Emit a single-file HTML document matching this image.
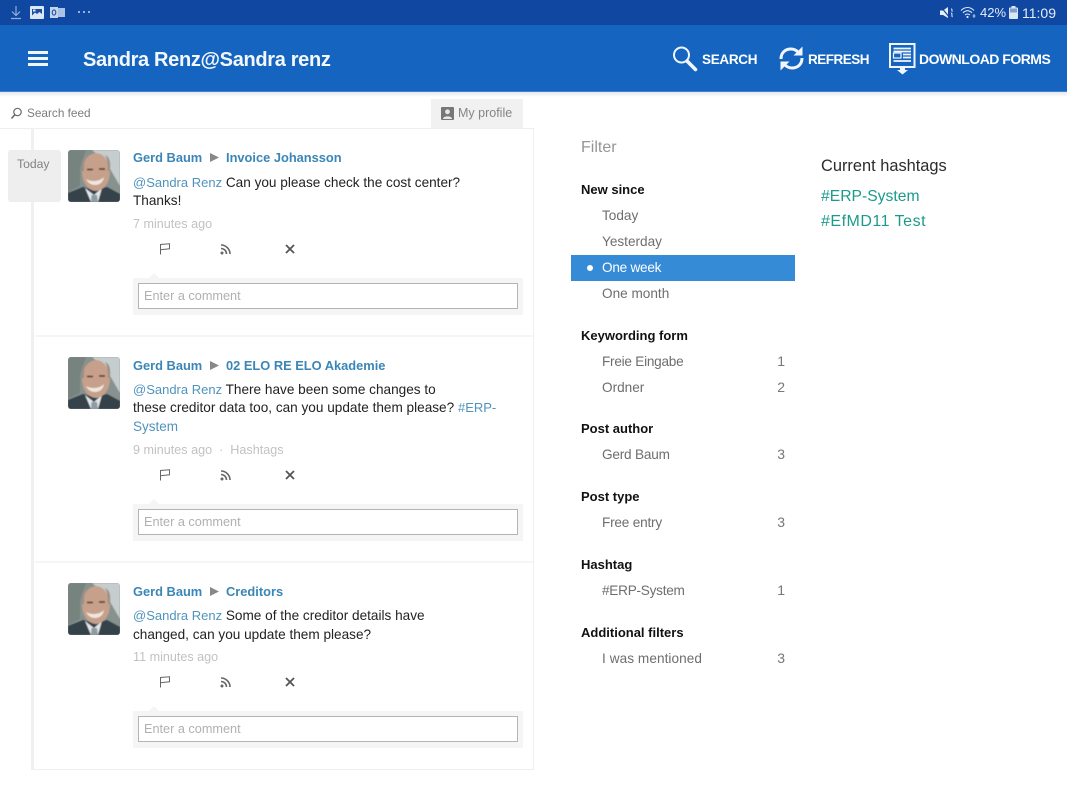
<!DOCTYPE html>
<html><head><meta charset="utf-8"><style>
html,body{margin:0;padding:0;background:#fff}
#p{position:relative;width:1067px;height:800px;overflow:hidden;font-family:"Liberation Sans",sans-serif;font-size:14px;background:#fff}
#p div,#p svg,#p span.a{position:absolute}
.t{white-space:nowrap;line-height:18px;height:18px}
.n{color:#3a86b7;font-weight:bold;font-size:12.85px}
.b{color:#222;font-size:13.6px}
.l{color:#4f94bd;font-size:13px}
.g{color:#c2c2c2;font-size:12.6px}
.f{color:#6e6e6e;font-size:13.6px;margin-top:1px}
.h{color:#111;font-weight:bold;font-size:13px}
.c{color:#777;font-size:14px;text-align:right;width:20px}
.box{background:#f5f5f5}
.inp{background:#fff;border:1px solid #b4b4b4;box-sizing:border-box;color:#b0b0b0;font-size:12.7px;line-height:24px;padding-left:5px;white-space:nowrap}
.w{color:#fff;font-weight:bold;font-size:14px}
</style></head><body><div id="p">
<svg width="0" height="0" style="position:absolute"><defs>
<filter id="bl" x="-5%" y="-5%" width="110%" height="110%"><feGaussianBlur stdDeviation="0.6"/></filter>
<symbol id="av" viewBox="0 0 52 52">
<rect width="52" height="52" fill="#87928f"/>
<g filter="url(#bl)">
<path d="M24 0H52V36L38 12Z" fill="#c6cdce"/>
<path d="M0 0H18L12 18 12 36 0 42Z" fill="#76837f"/>
<path d="M0 52V43L15 37 26 40 39 37 52 44V52Z" fill="#36434a"/>
<path d="M17 38L26 45 34 38 30 52H23Z" fill="#e3e6e9"/>
<path d="M23.500 45H29L30 52H23Z" fill="#8d9ba3"/>
<ellipse cx="28" cy="22" rx="14" ry="19" fill="#c6a08a"/>
<path d="M14 21C13 10 15 7 19 5 16 10 16 15 16 21ZM42 21C43 10 41 7 37 5 40 10 40 15 40 21Z" fill="#9b8f87"/>
<path d="M18 29C23 32 31 32 36 27 35 33 31 35 27 35S20 33 18 29Z" fill="#efe6de"/>
<path d="M19 19.500H25M31 19H37" stroke="#5e4436" stroke-width="1.800"/>
</g>
</symbol>
<symbol id="fl" viewBox="0 0 12 12"><path d="M1.500 11.500V1.500L10.500 0.800V5.800L1.500 6.800" fill="none" stroke="#666" stroke-width="1"/></symbol>
<symbol id="rs" viewBox="0 0 12 12"><circle cx="2" cy="10" r="1.500" fill="#666"/><path d="M1 5.500A5.500 5.500 0 0 1 6.500 11M1 2A9 9 0 0 1 10 11" fill="none" stroke="#666" stroke-width="1.600"/></symbol>
<symbol id="xx" viewBox="0 0 10 10"><path d="M1 1L9 9M9 1L1 9" stroke="#555" stroke-width="1.800"/></symbol>
</defs></svg>

<div style="left:0;top:0;width:1067px;height:25px;background:#0f47a1"></div>
<div style="left:0;top:25px;width:1067px;height:67px;background:#1565c0;border-bottom:1px solid #3f82cd;box-sizing:border-box"></div>
<div style="left:0;top:92px;width:1067px;height:5px;background:linear-gradient(#e4e7ec,#fff)"></div>

<svg style="left:10px;top:5px" width="12" height="15" viewBox="0 0 12 15"><path d="M6 1V10M2 6.500L6 10.500 10 6.500M1 13.500H11" fill="none" stroke="#8fb0dc" stroke-width="1.200"/></svg>
<svg style="left:30px;top:6px" width="14" height="13" viewBox="0 0 14 13"><rect width="14" height="13" rx="1" fill="#dce7f5"/><path d="M2 9.500L5 6.500 7 8 9.500 6 12 8V3H2Z" fill="#1b4f9f"/><rect x="3" y="3.500" width="2.500" height="2" fill="#dce7f5"/></svg>
<svg style="left:50px;top:6px" width="15" height="13" viewBox="0 0 15 13"><rect x="6" y="2" width="9" height="9" fill="#a9c2e5"/><rect x="0" y="1" width="8" height="11" fill="#c3d5ee"/><ellipse cx="4" cy="6.500" rx="1.800" ry="2.600" fill="none" stroke="#1b4f9f" stroke-width="1.100"/></svg>
<div style="left:78px;top:11px;width:2px;height:2px;background:#c5d5ec;border-radius:50%"></div>
<div style="left:83px;top:11px;width:2px;height:2px;background:#c5d5ec;border-radius:50%"></div>
<div style="left:88px;top:11px;width:2px;height:2px;background:#c5d5ec;border-radius:50%"></div>

<svg style="left:940px;top:6px" width="15" height="14" viewBox="0 0 15 14"><path d="M0 4.500H3L8 1V12L3 9H0Z" fill="#e8eff8"/><path d="M1 1L10 12" stroke="#0f47a1" stroke-width="1.200"/><path d="M11 3C13 3 11 5 12.500 5.500M11 7C13 7 11 10 12.500 11" fill="none" stroke="#e8eff8" stroke-width="1"/></svg>
<svg style="left:960px;top:6px" width="17" height="13" viewBox="0 0 17 13"><path d="M1 4.500C5 .5 10 .5 14 4.500M3 6.800C6 4 9 4 12 6.800M5 9C6.500 7.700 8.500 7.700 10 9" fill="none" stroke="#dce7f5" stroke-width="1.100"/><circle cx="7.500" cy="11" r="1.100" fill="#dce7f5"/><path d="M14 8V12M12.500 10H15.500" stroke="#dce7f5" stroke-width=".8"/></svg>
<div class="t" style="left:980px;top:4px;color:#e6edf7;font-size:13px">42%</div>
<svg style="left:1009px;top:6px" width="9" height="13" viewBox="0 0 9 13"><rect x="2.500" y="0" width="4" height="2" fill="#dce7f5"/><rect x="0" y="1.500" width="9" height="11.500" rx="1" fill="#dce7f5"/><rect x="1" y="2.500" width="7" height="4" fill="#7f9fd0"/></svg>
<div class="t" style="left:1022px;top:4px;color:#e6edf7;font-size:14px">11:09</div>

<div style="left:28px;top:51px;width:20px;height:2.500px;background:#f0f6fc"></div>
<div style="left:28px;top:57px;width:20px;height:2.500px;background:#f0f6fc"></div>
<div style="left:28px;top:63px;width:20px;height:2.500px;background:#f0f6fc"></div>
<div class="t" style="left:83px;top:47px;height:26px;line-height:26px;color:#f3f8fd;font-size:20px;font-weight:bold;letter-spacing:-.33px">Sandra Renz@Sandra renz</div>

<svg style="left:672px;top:45px" width="26" height="27" viewBox="0 0 26 27"><circle cx="9.500" cy="10" r="7.500" fill="none" stroke="#f2f6fc" stroke-width="2"/><path d="M15 16L23.500 24.500" stroke="#f2f6fc" stroke-width="3.600" stroke-linecap="round"/></svg>
<div class="t w" style="left:702px;top:51px;font-size:13.5px;letter-spacing:-.3px">SEARCH</div>
<svg style="left:779px;top:45px" width="25" height="27" viewBox="0 0 25 27"><path d="M2 14C2 7 7 4 12 4 15 4 17 5 19 7" fill="none" stroke="#f2f6fc" stroke-width="3"/><path d="M23.500 1.500V10.500H14.500Z" fill="#f2f6fc"/><path d="M23 13C23 20 18 23 13 23 10 23 8 22 6 20" fill="none" stroke="#f2f6fc" stroke-width="3"/><path d="M1.500 25.500V16.500H10.500Z" fill="#f2f6fc"/></svg>
<div class="t w" style="left:808px;top:51px;font-size:13.5px;letter-spacing:-.5px">REFRESH</div>
<svg style="left:889px;top:43px" width="27" height="32" viewBox="0 0 27 32"><path d="M1 1H25.500V24H1Z" fill="none" stroke="#f2f6fc" stroke-width="2"/><path d="M4.500 5.500H22M4.500 8.500H22M14 11.500H22M14 14.500H22M4.500 18H22" stroke="#f2f6fc" stroke-width="1.800"/><rect x="4.500" y="10" width="7.500" height="5" fill="none" stroke="#f2f6fc" stroke-width="1.200"/><rect x="11" y="24" width="5" height="3" fill="#f2f6fc"/><path d="M8 27H19L13.500 31.500Z" fill="#f2f6fc"/></svg>
<div class="t w" style="left:919px;top:50px;letter-spacing:-.51px">DOWNLOAD FORMS</div>

<svg style="left:10px;top:107px" width="13" height="13" viewBox="0 0 13 13"><circle cx="7.500" cy="5" r="3.700" fill="none" stroke="#666" stroke-width="1.200"/><path d="M4.800 7.800L1.500 11.500" stroke="#666" stroke-width="1.500"/></svg>
<div class="t" style="left:27px;top:104px;color:#7d7d7d;font-size:11.8px">Search feed</div>
<div class="box" style="left:431px;top:99px;width:92px;height:29px;background:#f1f1f1"></div>
<svg style="left:441px;top:107px" width="13" height="13" viewBox="0 0 13 13"><rect width="13" height="13" rx="1" fill="#777"/><circle cx="6.500" cy="4.800" r="2.400" fill="#e8e8e8"/><path d="M2 12C2 8.500 11 8.500 11 12Z" fill="#e8e8e8"/></svg>
<div class="t" style="left:458px;top:104px;color:#858585;font-size:12.5px">My profile</div>

<div style="left:0;top:128px;width:534px;height:1px;background:#eee"></div>
<div style="left:31px;top:128px;width:3px;height:642px;background:#f0f0f0"></div>
<div style="left:533px;top:128px;width:1px;height:642px;background:#f0f0f0"></div>
<div style="left:31px;top:769px;width:503px;height:1px;background:#efefef"></div>
<div style="left:35px;top:335px;width:498px;height:2px;background:#f5f5f5"></div>
<div style="left:35px;top:561px;width:498px;height:2px;background:#f5f5f5"></div>

<div style="left:8px;top:150px;width:53px;height:52px;background:#eeeeee;border-radius:3px"></div>
<div class="t" style="left:17px;top:155px;color:#838383;font-size:12.2px">Today</div>

<svg style="left:68px;top:150px;border-radius:3px" width="52" height="52"><use href="#av"/></svg>
<div class="t n" style="left:133px;top:149px">Gerd Baum</div>
<svg style="left:210px;top:153px" width="9" height="9"><path d="M0 0L9 4.500 0 9Z" fill="#888"/></svg>
<div class="t n" style="left:226px;top:149px">Invoice Johansson</div>
<div class="t b" style="left:133px;top:173px;margin-top:.5px"><span class="l">@Sandra Renz</span> Can you please check the cost center?</div>
<div class="t b" style="left:133px;top:192px">Thanks!</div>
<div class="t g" style="left:133px;top:215px">7 minutes ago</div>
<svg style="left:159px;top:243px" width="12" height="12"><use href="#fl"/></svg>
<svg style="left:220px;top:243px" width="12" height="12"><use href="#rs"/></svg>
<svg style="left:285px;top:244px" width="10" height="10"><use href="#xx"/></svg>
<div class="box" style="left:133px;top:278px;width:390px;height:37px"></div>
<svg style="left:148px;top:273px" width="12" height="6"><path d="M0 6L6 0 12 6Z" fill="#f5f5f5"/></svg>
<div class="inp" style="left:138px;top:283px;width:380px;height:26px">Enter a comment</div>

<svg style="left:68px;top:357px;border-radius:3px" width="52" height="52"><use href="#av"/></svg>
<div class="t n" style="left:133px;top:357px">Gerd Baum</div>
<svg style="left:210px;top:361px" width="9" height="9"><path d="M0 0L9 4.500 0 9Z" fill="#888"/></svg>
<div class="t n" style="left:226px;top:357px">02 ELO RE ELO Akademie</div>
<div class="t b" style="left:133px;top:381px"><span class="l">@Sandra Renz</span> There have been some changes to</div>
<div class="t b" style="left:133px;top:399px">these creditor data too, can you update them please? <span class="l">#ERP-</span></div>
<div class="t b" style="left:133px;top:418px;color:#4f94bd;font-size:13.5px">System</div>
<div class="t g" style="left:133px;top:441px">9 minutes ago &nbsp;·&nbsp; Hashtags</div>
<svg style="left:159px;top:469px" width="12" height="12"><use href="#fl"/></svg>
<svg style="left:220px;top:469px" width="12" height="12"><use href="#rs"/></svg>
<svg style="left:285px;top:470px" width="10" height="10"><use href="#xx"/></svg>
<div class="box" style="left:133px;top:504px;width:390px;height:37px"></div>
<svg style="left:148px;top:499px" width="12" height="6"><path d="M0 6L6 0 12 6Z" fill="#f5f5f5"/></svg>
<div class="inp" style="left:138px;top:509px;width:380px;height:26px">Enter a comment</div>

<svg style="left:68px;top:583px;border-radius:3px" width="52" height="52"><use href="#av"/></svg>
<div class="t n" style="left:133px;top:583px">Gerd Baum</div>
<svg style="left:210px;top:587px" width="9" height="9"><path d="M0 0L9 4.500 0 9Z" fill="#888"/></svg>
<div class="t n" style="left:226px;top:583px">Creditors</div>
<div class="t b" style="left:133px;top:607px"><span class="l">@Sandra Renz</span> Some of the creditor details have</div>
<div class="t b" style="left:133px;top:626px">changed, can you update them please?</div>
<div class="t g" style="left:133px;top:648px">11 minutes ago</div>
<svg style="left:159px;top:676px" width="12" height="12"><use href="#fl"/></svg>
<svg style="left:220px;top:676px" width="12" height="12"><use href="#rs"/></svg>
<svg style="left:285px;top:677px" width="10" height="10"><use href="#xx"/></svg>
<div class="box" style="left:133px;top:711px;width:390px;height:37px"></div>
<svg style="left:148px;top:706px" width="12" height="6"><path d="M0 6L6 0 12 6Z" fill="#f5f5f5"/></svg>
<div class="inp" style="left:138px;top:716px;width:380px;height:26px">Enter a comment</div>

<div class="t" style="left:581px;top:139px;color:#959595;font-size:16px">Filter</div>
<div class="t h" style="left:581px;top:181px">New since</div>
<div class="t f" style="left:602px;top:206px">Today</div>
<div class="t f" style="left:602px;top:232px">Yesterday</div>
<div style="left:571px;top:255px;width:224px;height:26px;background:#368bd6"></div>
<div style="left:587px;top:265px;width:6px;height:6px;background:#fff;border-radius:50%"></div>
<div class="t f" style="left:602px;top:258px;color:#fff;letter-spacing:-.25px">One week</div>
<div class="t f" style="left:602px;top:284px">One month</div>
<div class="t h" style="left:581px;top:327px">Keywording form</div>
<div class="t f" style="left:602px;top:352px;letter-spacing:-.25px">Freie Eingabe</div><div class="t c" style="left:765px;top:352px">1</div>
<div class="t f" style="left:602px;top:378px">Ordner</div><div class="t c" style="left:765px;top:378px">2</div>
<div class="t h" style="left:581px;top:420px">Post author</div>
<div class="t f" style="left:602px;top:445px;letter-spacing:-.2px">Gerd Baum</div><div class="t c" style="left:765px;top:445px">3</div>
<div class="t h" style="left:581px;top:488px">Post type</div>
<div class="t f" style="left:602px;top:513px;letter-spacing:-.2px">Free entry</div><div class="t c" style="left:765px;top:513px">3</div>
<div class="t h" style="left:581px;top:556px">Hashtag</div>
<div class="t f" style="left:602px;top:581px;letter-spacing:-.25px">#ERP-System</div><div class="t c" style="left:765px;top:581px">1</div>
<div class="t h" style="left:581px;top:624px">Additional filters</div>
<div class="t f" style="left:602px;top:649px;letter-spacing:.07px">I was mentioned</div><div class="t c" style="left:765px;top:649px">3</div>

<div class="t" style="left:821px;top:157px;color:#2b2b2b;font-size:16.4px">Current hashtags</div>
<div class="t" style="left:821px;top:187px;color:#1d9a8c;font-size:15.7px;height:20px;line-height:20px">#ERP-System</div>
<div class="t" style="left:821px;top:212px;color:#1d9a8c;font-size:16px;letter-spacing:.5px;height:20px;line-height:20px">#EfMD11 Test</div>
</div></body></html>
